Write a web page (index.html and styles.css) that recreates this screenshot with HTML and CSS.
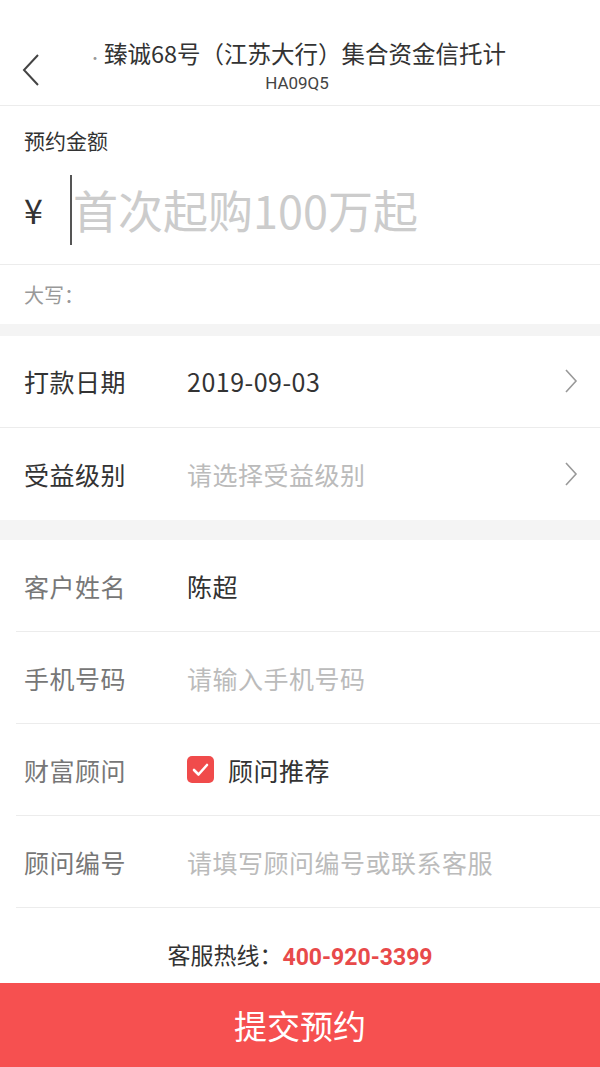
FILE: index.html
```html
<!DOCTYPE html>
<html lang="zh">
<head>
<meta charset="utf-8">
<title>预约</title>
<link rel="stylesheet" href="styles.css">
</head>
<body>
<div class="page">
  <header class="topbar">
    <div class="back">
      <svg width="18" height="32" viewBox="0 0 18 32"><polyline points="16,1 2,16 16,31" fill="none" stroke="#444" stroke-width="2"/></svg>
    </div>
    <div class="titles">
      <div class="title"><span class="dot">·</span>臻诚68号（江苏大行）集合资金信托计</div>
      <div class="subtitle">HA09Q5</div>
    </div>
  </header>

  <section class="amount">
    <div class="amount-label">预约金额</div>
    <div class="amount-input">
      <span class="yen">¥</span>
      <span class="caret"></span>
      <span class="amount-ph">首次起购100万起</span>
    </div>
  </section>
  <div class="daxie">大写：</div>

  <div class="band band-s"></div>

  <section class="group">
    <div class="row full">
      <span class="label dark">打款日期</span>
      <span class="value">2019-09-03</span>
      <svg class="chev" width="14" height="26" viewBox="0 0 14 26"><polyline points="2,2 12,13 2,24" fill="none" stroke="#999" stroke-width="1.6"/></svg>
    </div>
    <div class="row">
      <span class="label dark">受益级别</span>
      <span class="value ph">请选择受益级别</span>
      <svg class="chev" width="14" height="26" viewBox="0 0 14 26"><polyline points="2,2 12,13 2,24" fill="none" stroke="#999" stroke-width="1.6"/></svg>
    </div>
  </section>

  <div class="band band-l"></div>

  <section class="group">
    <div class="row inset">
      <span class="label">客户姓名</span>
      <span class="value">陈超</span>
    </div>
    <div class="row inset">
      <span class="label">手机号码</span>
      <span class="value ph">请输入手机号码</span>
    </div>
    <div class="row inset">
      <span class="label">财富顾问</span>
      <span class="check">
        <svg width="27" height="27" viewBox="0 0 27 27"><rect x="0" y="0" width="27" height="27" rx="5" fill="#f04b4b"/><polyline points="7,14 11.5,18.5 20,9" fill="none" stroke="#fff" stroke-width="2.6" stroke-linecap="round" stroke-linejoin="round"/></svg>
      </span>
      <span class="value">顾问推荐</span>
    </div>
    <div class="row inset">
      <span class="label">顾问编号</span>
      <span class="value ph">请填写顾问编号或联系客服</span>
    </div>
  </section>

  <div class="hotline">客服热线：<b>400-920-3399</b></div>

  <button class="submit">提交预约</button>
</div>
</body>
</html>
```

FILE: styles.css
```css
* { box-sizing: border-box; margin: 0; padding: 0; }
html, body { background: #fff; }
body {
  font-family: "Noto Sans CJK SC", "Noto Sans", sans-serif;
  color: #333;
  width: 600px;
  height: 1067px;
  overflow: hidden;
}
.page { display: flex; flex-direction: column; height: 1067px; }

.topbar {
  height: 106px;
  border-bottom: 1px solid #ececec;
  display: flex;
  align-items: flex-start;
}
.back { width: 85px; padding: 54px 0 0 22px; }
.titles {
  width: 424px;
  display: flex;
  flex-direction: column;
  align-items: center;
  padding-top: 38px;
}
.title {
  white-space: nowrap;
  font-size: 23.5px;
  line-height: 30px;
  color: #333;
}
.dot { font-size: 14px; color: #999; margin-right: 2px; }
.subtitle {
  font-family: "Roboto", "Noto Sans", sans-serif;
  font-size: 17px;
  line-height: 22px;
  color: #444;
}

.amount { padding: 0 24px; border-bottom: 1px solid #ececec; height: 160px; }
.amount-label { font-size: 21px; line-height: 28px; margin-top: 20px; color: #333; }
.amount-input { display: flex; align-items: center; height: 70px; margin-top: 21px; }
.yen { font-size: 34px; width: 46px; color: #333; }
.caret { width: 2px; height: 70px; background: #555; margin-right: 1px; }
.amount-ph { font-size: 45px; color: #ccc; line-height: 60px; }

.daxie { height: 59px; line-height: 60px; padding-left: 24px; font-size: 20px; color: #999; }

.band { background: #f4f4f4; }
.band-s { height: 12px; }
.band-l { height: 20px; }

.group { display: flex; flex-direction: column; }
.row {
  height: 92px;
  display: flex;
  align-items: center;
  padding: 0 24px;
  position: relative;
}
.row.full { border-bottom: 1px solid #ececec; }
.row.inset::after {
  content: "";
  position: absolute;
  left: 16px; right: 0; bottom: 0;
  height: 1px;
  background: #ececec;
}
.label { font-size: 25px; width: 163px; color: #777; letter-spacing: 0.5px; }
.label.dark { color: #333; }
.value { font-size: 25px; color: #333; flex: 1; letter-spacing: 0.5px; }
.value.ph { color: #bbb; }
.check { display: flex; width: 41px; }
.chev { margin-right: -2px; }

.hotline {
  height: 76px;
  display: flex;
  align-items: flex-end;
  justify-content: center;
  padding-bottom: 12px;
  font-size: 23px;
  color: #333;
}
.hotline b { color: #e84a4a; font-family: "Roboto", "Noto Sans", sans-serif; font-weight: 700; font-size: 23px; }

.submit {
  border: 0;
  height: 84px;
  background: #f65050;
  color: #fff;
  font-family: "Noto Sans CJK SC", sans-serif;
  font-size: 33px;
  width: 600px;
}
```
